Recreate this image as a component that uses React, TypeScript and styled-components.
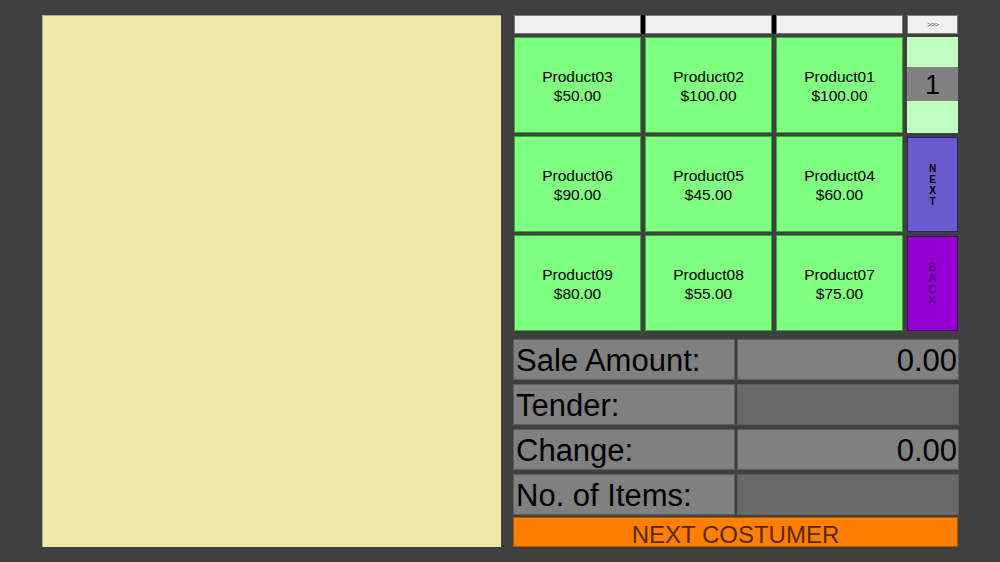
import styled, { createGlobalStyle } from 'styled-components'

const GlobalStyle = createGlobalStyle`
    html, body {
        margin: 0;
        padding: 0;
        background: #404040;
        font-family: "Liberation Sans", Arial, sans-serif;
    }
`

//////////////////////////////////////////////////////////////////////

const Screen = styled.div`
    width: 1000px;
    height: 562px;

    padding: 15px 0 0 42px;
    box-sizing: border-box;

    display: flex;
    gap: 12px;
`

const Receipt = styled.div`
    width: 459px;
    height: 532px;
    box-sizing: border-box;

    background: #eee8aa;
    border-top: 1px solid #a8a8a0;
    border-left: 1px solid #a8a8a0;
`

const Side = styled.div`
    width: 446px;

    display: flex;
    flex-direction: column;
`

const Grid = styled.div`
    padding-left: 1px;

    display: grid;
    grid-template-columns: 127px 127px 127px 51px;
    grid-template-rows: 19px 96px 96px 96px;
    column-gap: 4px;
    row-gap: 3px;
`

const Tab = styled.div<{ $split?: boolean }>`
    box-sizing: border-box;
    position: relative;

    background: #f0f0f0;
    border: 1px solid #7a7a7a;

    display: flex;
    justify-content: center;
    align-items: center;

    color: #555;
    font-size: 8px;
    letter-spacing: -1px;

    &::after {
        content: '';
        display: ${({ $split }) => ($split ? 'block' : 'none')};
        position: absolute;
        top: -1px;
        right: -5px;
        width: 4px;
        height: 19px;
        background: #000;
    }
`

const Product = styled.div`
    box-sizing: border-box;

    background: #80ff80;
    border: 1px solid #36a836;

    display: flex;
    flex-direction: column;
    justify-content: center;
    align-items: center;

    color: #000;
    font-size: 15.5px;
    line-height: 19px;
    padding-top: 2px;
`

const Pager = styled.div`
    display: grid;
    grid-template-rows: 30px 34px 1fr;
`

const PagerPad = styled.div`
    background: #c0ffc0;
`

const PageNumber = styled.div`
    background: #808080;

    display: flex;
    justify-content: center;
    align-items: center;

    color: #000;
    font-size: 27px;
    padding-top: 2px;
`

const NavButton = styled.div<{ $bg: string; $border: string; $color: string; $bold?: boolean }>`
    box-sizing: border-box;
    height: 95px;
    margin-top: 1px;

    background: ${({ $bg }) => $bg};
    border: 1px solid ${({ $border }) => $border};

    display: flex;
    flex-direction: column;
    justify-content: center;
    align-items: center;

    color: ${({ $color }) => $color};
    font-size: ${({ $bold }) => ($bold ? 10 : 11)}px;
    font-weight: ${({ $bold }) => ($bold ? 700 : 400)};
    line-height: 11px;
`

const Totals = styled.div`
    margin-top: 8px;

    display: grid;
    grid-template-columns: 222px 222px;
    grid-auto-rows: 41px;
    column-gap: 2px;
    row-gap: 4px;
`

const Cell = styled.div<{ $dark?: boolean; $right?: boolean }>`
    box-sizing: border-box;

    background: ${({ $dark }) => ($dark ? '#696969' : '#808080')};
    border: 1px solid #5e5e5e;

    display: flex;
    align-items: center;
    justify-content: ${({ $right }) => ($right ? 'flex-end' : 'flex-start')};

    padding: 2px 1px 0 2px;

    color: #000;
    font-size: 31px;
    white-space: nowrap;
`

const NextCustomer = styled.div`
    box-sizing: border-box;
    height: 30px;
    margin-top: 2px;
    width: 445px;

    background: #ff8000;
    border: 1px solid #b05800;

    display: flex;
    justify-content: center;
    align-items: center;

    color: #5a2800;
    font-size: 24px;
    padding-top: 5px;
`

//////////////////////////////////////////////////////////////////////

const products = [
    ['Product03', '$50.00'], ['Product02', '$100.00'], ['Product01', '$100.00'],
    ['Product06', '$90.00'], ['Product05', '$45.00'], ['Product04', '$60.00'],
    ['Product09', '$80.00'], ['Product08', '$55.00'], ['Product07', '$75.00'],
]

const totals = [
    { label: 'Sale Amount:', value: '0.00', dark: false },
    { label: 'Tender:', value: '', dark: true },
    { label: 'Change:', value: '0.00', dark: false },
    { label: 'No. of Items:', value: '', dark: true },
]

function Letters({ word }: { word: string }) {
    return <>{word.split('').map((c, i) => <span key={i}>{c}</span>)}</>
}

export default function App() {
    const rows = [0, 1, 2].map(r => products.slice(r * 3, r * 3 + 3))

    return (
        <Screen>
            <GlobalStyle />
            <Receipt />

            <Side>
                <Grid>
                    <Tab $split />
                    <Tab $split />
                    <Tab />
                    <Tab>&gt;&gt;&gt;</Tab>

                    {rows[0].map(([name, price]) => (
                        <Product key={name}><span>{name}</span><span>{price}</span></Product>
                    ))}
                    <Pager>
                        <PagerPad />
                        <PageNumber>1</PageNumber>
                        <PagerPad />
                    </Pager>

                    {rows[1].map(([name, price]) => (
                        <Product key={name}><span>{name}</span><span>{price}</span></Product>
                    ))}
                    <NavButton $bg="#6a5acd" $border="#2a2470" $color="#000" $bold>
                        <Letters word="NEXT" />
                    </NavButton>

                    {rows[2].map(([name, price]) => (
                        <Product key={name}><span>{name}</span><span>{price}</span></Product>
                    ))}
                    <NavButton $bg="#9400d3" $border="#4a0068" $color="#3a0058">
                        <Letters word="BACK" />
                    </NavButton>
                </Grid>

                <Totals>
                    {totals.flatMap(t => [
                        <Cell key={t.label}>{t.label}</Cell>,
                        <Cell key={t.label + 'v'} $dark={t.dark} $right>{t.value}</Cell>,
                    ])}
                </Totals>

                <NextCustomer>NEXT COSTUMER</NextCustomer>
            </Side>
        </Screen>
    )
}
